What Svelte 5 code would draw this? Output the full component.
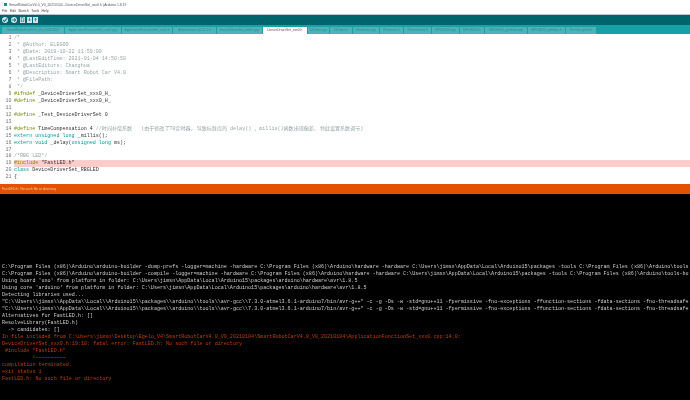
<script>
  const tabs = [
    { name: "SmartRobotCarV4.0_V0_20210104", w: 63 },
    { name: "ApplicationFunctionSet_xxx0.cpp", w: 57 },
    { name: "ApplicationFunctionSet_xxx0.h", w: 51 },
    { name: "ArduinoJson-v6.11.1.h", w: 44 },
    { name: "DeviceDriverSet_xxx0.cpp", w: 45.5 },
    { name: "DeviceDriverSet_xxx0.h", w: 45.5, active: true },
    { name: "I2Cdev.cpp", w: 22 },
    { name: "I2Cdev.h", w: 23 },
    { name: "IRremote.cpp", w: 27 },
    { name: "IRremote.h", w: 24 },
    { name: "IRremoteInt.h", w: 28 },
    { name: "MPU6050.cpp", w: 28 },
    { name: "MPU6050.h", w: 25 },
    { name: "MPU6050_getdata.cpp", w: 43 },
    { name: "MPU6050_getdata.h", w: 38 },
    { name: "PinChangeInt.h", w: 31 }
  ];

  const code = [
    { t: "/*", c: "cm" },
    { t: " * @Author: ELEGOO", c: "cm" },
    { t: " * @Date: 2019-10-22 11:59:09", c: "cm" },
    { t: " * @LastEditTime: 2021-01-04 14:50:50", c: "cm" },
    { t: " * @LastEditors: Changhua", c: "cm" },
    { t: " * @Description: Smart Robot Car V4.0", c: "cm" },
    { t: " * @FilePath:", c: "cm" },
    { t: " */", c: "cm" },
    { k: "#ifndef", t: " _DeviceDriverSet_xxx0_H_" },
    { k: "#define", t: " _DeviceDriverSet_xxx0_H_" },
    { t: "" },
    { k: "#define", t: " _Test_DeviceDriverSet 0" },
    { t: "" },
    { k: "#define", t: " TimeCompensation 4 ", cm: "//时间补偿系数   (由于修改了T0定时器, 导致标准库的 delay() 、millis()函数出现偏差, 特此设置系数调节)" },
    { b: "extern unsigned long", t: " _millis();" },
    { b: "extern void", t: " _delay(", b2: "unsigned long", t2: " ms);" },
    { t: "" },
    { t: "/*RBG LED*/", c: "cm" },
    { k: "#include", t: " \"FastLED.h\"", hl: true },
    { b: "class", t: " DeviceDriverSet_RBGLED" },
    { t: "{" }
  ];

  const pf = "C:\\Program Files (x86)\\Arduino";
  const ac = "C:\\Users\\jimsn\\AppData\\Local\\Arduino15";
  const gcc = `"C:\\\\Users\\\\jimsn\\\\AppData\\\\Local\\\\Arduino15\\\\packages\\\\arduino\\\\tools\\\\avr-gcc\\\\7.3.0-atmel3.6.1-arduino7/bin/avr-g++" -c -g -Os -w -std=gnu++11 -fpermissive -fno-exceptions -ffunction-sections -fdata-sections -fno-threadsafe-statics`;
  // the console window cuts the long lines at its right edge
  const cut = (s) => s.slice(0, 226);
  const log = [
    { t: cut(`${pf}\\arduino-builder -dump-prefs -logger=machine -hardware ${pf}\\hardware -hardware ${ac}\\packages -tools ${pf}\\tools-builder`) },
    { t: cut(`${pf}\\arduino-builder -compile -logger=machine -hardware ${pf}\\hardware -hardware ${ac}\\packages -tools ${pf}\\tools-builder`) },
    { t: `Using board 'uno' from platform in folder: ${ac}\\packages\\arduino\\hardware\\avr\\1.8.5` },
    { t: `Using core 'arduino' from platform in folder: ${ac}\\packages\\arduino\\hardware\\avr\\1.8.5` },
    { t: "Detecting libraries used..." },
    { t: cut(gcc) },
    { t: cut(gcc) },
    { t: "Alternatives for FastLED.h: []" },
    { t: "ResolveLibrary(FastLED.h)" },
    { t: "  -> candidates: []" },
    { t: "In file included from C:\\Users\\jimsn\\Desktop\\Egelo_V4\\SmartRobotCarV4.0_V0_20210104\\SmartRobotCarV4.0_V0_20210104\\ApplicationFunctionSet_xxx0.cpp:14:0:", err: true },
    { t: "DeviceDriverSet_xxx0.h:19:10: fatal error: FastLED.h: No such file or directory", err: true },
    { t: " #include \"FastLED.h\"", err: true },
    { t: "          ^~~~~~~~~~~", err: true },
    { t: "compilation terminated.", err: true },
    { t: "exit status 1", err: true },
    { t: "FastLED.h: No such file or directory", err: true }
  ];
</script>

<main class="ide">
  <div class="titlebar">
    <span class="appicon"></span>
    <span>SmartRobotCarV4.0_V0_20210104 - DeviceDriverSet_xxx0.h | Arduino 1.8.19</span>
  </div>
  <div class="menubar">
    <span>File</span><span>Edit</span><span>Sketch</span><span>Tools</span><span>Help</span>
  </div>
  <div class="toolbar">
    <span class="btn round">
      <svg viewBox="0 0 8 8" width="6" height="6"><path d="M1.5 4.2 3.3 6 6.5 2" fill="none" stroke="#00626a" stroke-width="1.4" /></svg>
    </span>
    <span class="btn round second">
      <svg viewBox="0 0 8 8" width="6" height="6"><path d="M1 4H6M4 1.8 6.5 4 4 6.2" fill="none" stroke="#00626a" stroke-width="1.2" /></svg>
    </span>
    <span class="btn square"><svg viewBox="0 0 8 8" width="5" height="5"><path d="M2 1H5L6 2V7H2Z" fill="none" stroke="#00626a" /></svg></span>
    <span class="btn square"><svg viewBox="0 0 8 8" width="5" height="5"><path d="M4 1V6M2 4 4 6 6 4" fill="none" stroke="#00626a" /></svg></span>
    <span class="btn square"><svg viewBox="0 0 8 8" width="5" height="5"><path d="M4 7V2M2 4 4 2 6 4" fill="none" stroke="#00626a" /></svg></span>
  </div>
  <div class="tabs">
    {#each tabs as tab}
      <span class="tab" class:active={tab.active} style="width: {tab.w}px">{tab.name}</span>
    {/each}
  </div>
  <div class="editor">
    {#each code as line, i}
      <div class="line" class:hl={line.hl}>
        <span class="num">{i + 1}</span><span class="src"
          >{#if line.k}<span class="kw">{line.k}</span>{/if}{#if line.b}<span class="blue">{line.b}</span>{/if}<span class={line.c}>{line.t}</span>{#if line.b2}<span class="blue">{line.b2}</span>{/if}{#if line.t2}{line.t2}{/if}{#if line.cm}<span class="cm">{line.cm}</span>{/if}</span>
      </div>
    {/each}
  </div>
  <div class="status">FastLED.h: No such file or directory</div>
  <div class="console">
    {#each log as row}
      <div class="logline" class:err={row.err}>{row.t}</div>
    {/each}
  </div>
</main>

<style>
  :global(body) {
    margin: 0;
    background: #000;
  }

  .ide {
    width: 690px;
    height: 400px;
    overflow: hidden;
    display: flex;
    flex-direction: column;
    filter: blur(0.4px);
  }

  .titlebar {
    height: 9px;
    background: #fff;
    display: flex;
    align-items: center;
    gap: 2px;
    padding-left: 4px;
    font: 3.4px "Liberation Sans", sans-serif;
    color: #555;
  }

  .appicon {
    width: 3px;
    height: 3px;
    background: #1a8f96;
  }

  .menubar {
    height: 5px;
    background: #fff;
    display: flex;
    gap: 2.5px;
    padding-left: 2px;
    font: 3.4px/4px "Liberation Sans", sans-serif;
    color: #444;
  }

  .toolbar {
    height: 9.5px;
    background: #00646c;
    border-top: 0.5px solid #b9c4c5;
    display: flex;
    align-items: center;
    gap: 1.5px;
    padding-left: 2px;
  }

  .btn {
    background: #cfe5e6;
    display: flex;
    align-items: center;
    justify-content: center;
  }

  .round {
    width: 6px;
    height: 6px;
    border-radius: 50%;
  }

  .second {
    margin: 0 1.5px;
  }

  .square {
    width: 5px;
    height: 6px;
  }

  .tabs {
    height: 9px;
    box-sizing: border-box;
    padding: 2px 0 0 2px;
    background: #17a1a5;
    display: flex;
  }

  .tab {
    box-sizing: border-box;
    height: 7px;
    background: #4db3b6;
    border-right: 1px solid #17a1a5;
    color: #2a8d90;
    font: 3.3px/7px "Liberation Sans", sans-serif;
    text-align: center;
    white-space: nowrap;
    overflow: hidden;
  }

  .tab.active {
    background: #fff;
    color: #555;
  }

  .editor {
    height: 150px;
    background: #fff;
    padding-top: 1.5px;
    box-sizing: border-box;
    font: 5.05px/6.97px "Liberation Mono", "Noto Sans CJK SC", monospace;
    color: #333;
    overflow: hidden;
  }

  .line {
    display: flex;
    height: 6.97px;
    white-space: pre;
  }

  .line.hl {
    background: #ffcccc;
  }

  .num {
    width: 14px;
    padding-right: 2.5px;
    box-sizing: border-box;
    text-align: right;
    color: #777;
    background: #fff;
    flex: none;
  }

  .kw {
    color: #728e00;
  }

  .blue {
    color: #00979c;
  }

  .cm {
    color: #95a5a6;
  }

  .status {
    height: 10px;
    background: #e35200;
    color: #f6c9a8;
    font: 3.45px/10px "Liberation Sans", sans-serif;
    padding-left: 2px;
  }

  .console {
    flex: 1;
    background: #000;
    padding: 70.5px 0 0 2px;
    font: 5.07px/7px "Liberation Mono", monospace;
    color: #cfcfcf;
    white-space: pre;
    overflow: hidden;
  }

  .logline.err {
    color: #bd410b;
  }
</style>
